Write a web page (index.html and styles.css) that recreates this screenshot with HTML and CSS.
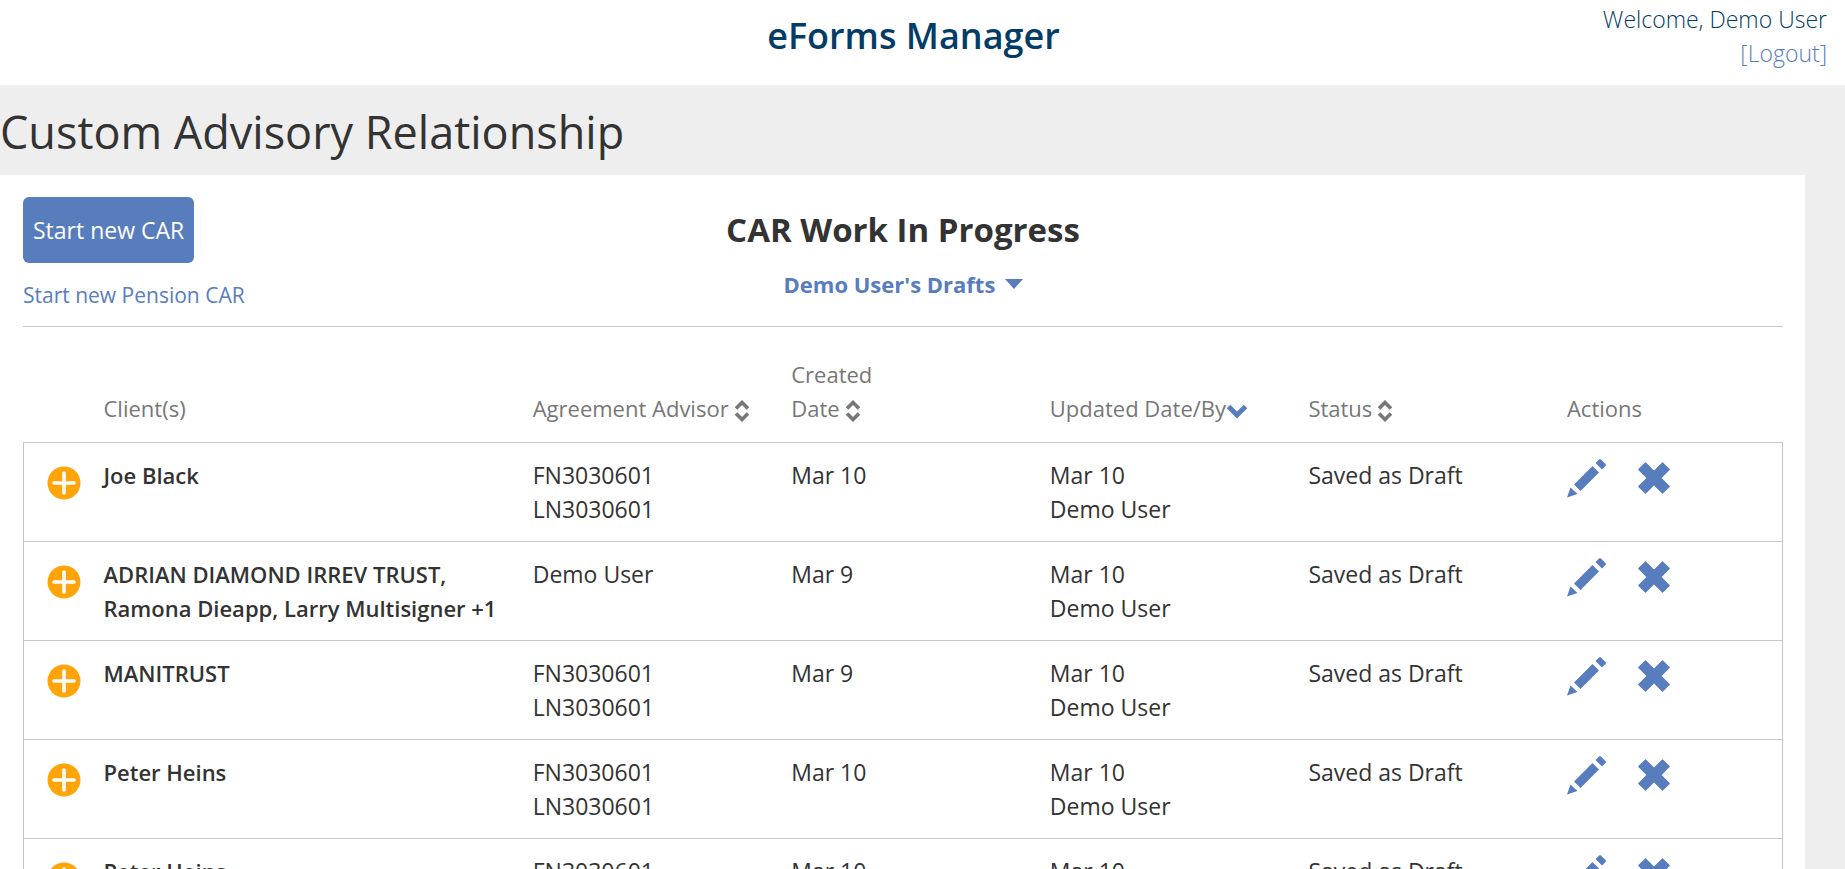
FILE: index.html
```html
<!DOCTYPE html>
<html lang="en">
<head>
<meta charset="utf-8">
<title>eForms Manager</title>
<link rel="stylesheet" href="styles.css">
</head>
<body>
<svg class="sprite" aria-hidden="true">
  <symbol id="plus" viewBox="0 0 34 34"><circle cx="17" cy="17" r="16.5" fill="#ffa50a"/><path d="M17 7v20M7 17h20" stroke="#fff" stroke-width="3.6" stroke-linecap="round"/></symbol>
  <symbol id="pencil" viewBox="0 0 40 40"><path d="M0 39.500 3.500 29.500l7 6.500ZM7 26.500 25.500 8l6.500 6.500L13.500 33ZM28.500 5 32 1.500q1-1 2 0l4.500 4.500q1 1 0 2L35 11.500Z" fill="currentColor"/></symbol>
  <symbol id="cross" viewBox="0 0 32 32"><path d="M7.500.8 16 9.300 24.500.8 31.200 7.500 22.700 16l8.500 8.500-6.700 6.700L16 22.700 7.500 31.200.8 24.500 9.300 16 .8 7.500Z" fill="currentColor" stroke="currentColor" stroke-width="1.200" stroke-linejoin="round"/></symbol>
  <symbol id="sort" viewBox="0 0 16 22"><path d="M2 8.500 8 2.500l6 6M2 13.500l6 6 6-6" fill="none" stroke="currentColor" stroke-width="3.600"/></symbol>
  <symbol id="down" viewBox="0 0 22 15"><path d="M2.500 2.500 11 11l8.500-8.500" fill="none" stroke="currentColor" stroke-width="5"/></symbol>
</svg>
<header class="topbar">
  <h1 class="brand">eForms Manager</h1>
  <div class="account">
    <div>Welcome, Demo User</div>
    <a href="#logout">[Logout]</a>
  </div>
</header>
<h2 class="page-title">Custom Advisory Relationship</h2>
<main class="panel">
  <section class="intro">
    <div class="start">
      <button class="primary" type="button">Start new CAR</button>
      <a class="secondary" href="#pension">Start new Pension CAR</a>
    </div>
    <div class="heading">
      <h3>CAR Work In Progress</h3>
      <div class="filter">
        <select aria-label="Drafts to show"><option>Demo User's Drafts</option></select>
        <svg class="caret" viewBox="0 0 18 10" aria-hidden="true"><path d="M0 0h18L9 10Z" fill="currentColor"/></svg>
      </div>
    </div>
  </section>
  <table class="drafts">
    <colgroup><col class="c-expand"><col class="c-client"><col class="c-data"><col class="c-data"><col class="c-data"><col class="c-data"><col></colgroup>
    <thead>
      <tr>
        <th aria-label="Expand"></th>
        <th>Client(s)</th>
        <th><button type="button">Agreement Advisor<svg class="sort"><use href="#sort"/></svg></button></th>
        <th><button type="button">Created<br>Date<svg class="sort"><use href="#sort"/></svg></button></th>
        <th><button type="button">Updated Date/By<svg class="down"><use href="#down"/></svg></button></th>
        <th><button type="button">Status<svg class="sort"><use href="#sort"/></svg></button></th>
        <th>Actions</th>
      </tr>
    </thead>
    <tbody>
      <tr>
        <td class="expand"><button type="button" aria-label="Expand"><svg class="plus"><use href="#plus"/></svg></button></td>
        <td class="client">Joe Black</td>
        <td>FN3030601<br>LN3030601</td>
        <td>Mar 10</td>
        <td>Mar 10<br>Demo User</td>
        <td>Saved as Draft</td>
        <td><div class="actions"><button type="button" aria-label="Edit"><svg class="pencil"><use href="#pencil"/></svg></button><button type="button" aria-label="Delete"><svg class="cross"><use href="#cross"/></svg></button></div></td>
      </tr>
      <tr>
        <td class="expand"><button type="button" aria-label="Expand"><svg class="plus"><use href="#plus"/></svg></button></td>
        <td class="client">ADRIAN DIAMOND IRREV TRUST,<br>Ramona Dieapp, Larry Multisigner +1</td>
        <td>Demo User</td>
        <td>Mar 9</td>
        <td>Mar 10<br>Demo User</td>
        <td>Saved as Draft</td>
        <td><div class="actions"><button type="button" aria-label="Edit"><svg class="pencil"><use href="#pencil"/></svg></button><button type="button" aria-label="Delete"><svg class="cross"><use href="#cross"/></svg></button></div></td>
      </tr>
      <tr>
        <td class="expand"><button type="button" aria-label="Expand"><svg class="plus"><use href="#plus"/></svg></button></td>
        <td class="client">MANITRUST</td>
        <td>FN3030601<br>LN3030601</td>
        <td>Mar 9</td>
        <td>Mar 10<br>Demo User</td>
        <td>Saved as Draft</td>
        <td><div class="actions"><button type="button" aria-label="Edit"><svg class="pencil"><use href="#pencil"/></svg></button><button type="button" aria-label="Delete"><svg class="cross"><use href="#cross"/></svg></button></div></td>
      </tr>
      <tr>
        <td class="expand"><button type="button" aria-label="Expand"><svg class="plus"><use href="#plus"/></svg></button></td>
        <td class="client">Peter Heins</td>
        <td>FN3030601<br>LN3030601</td>
        <td>Mar 10</td>
        <td>Mar 10<br>Demo User</td>
        <td>Saved as Draft</td>
        <td><div class="actions"><button type="button" aria-label="Edit"><svg class="pencil"><use href="#pencil"/></svg></button><button type="button" aria-label="Delete"><svg class="cross"><use href="#cross"/></svg></button></div></td>
      </tr>
      <tr>
        <td class="expand"><button type="button" aria-label="Expand"><svg class="plus"><use href="#plus"/></svg></button></td>
        <td class="client">Peter Heins</td>
        <td>FN3030601<br>LN3030601</td>
        <td>Mar 10</td>
        <td>Mar 10<br>Demo User</td>
        <td>Saved as Draft</td>
        <td><div class="actions"><button type="button" aria-label="Edit"><svg class="pencil"><use href="#pencil"/></svg></button><button type="button" aria-label="Delete"><svg class="cross"><use href="#cross"/></svg></button></div></td>
      </tr>
    </tbody>
  </table>
</main>
</body>
</html>
```
FILE: styles.css
```css
* { box-sizing: border-box; }
html { height: 100%; overflow: hidden; }
body {
  height: 100%;
  margin: 0;
  overflow: hidden;
  background: #eee;
  color: #333;
  font: 400 23px/34px "Open Sans", "Noto Sans", sans-serif;
}
h1, h2, h3 { margin: 0; }
a { color: #587dbd; text-decoration: none; }
button {
  padding: 0;
  border: 0;
  background: none;
  color: inherit;
  font: inherit;
  text-align: left;
  cursor: pointer;
}
svg { display: block; }
.sprite { position: absolute; width: 0; height: 0; }

.topbar {
  display: grid;
  grid-template-columns: 1fr auto 1fr;
  padding: 2px 18px 15px 0;
  background: #fff;
  color: #043c66;
}
.brand {
  grid-column: 2;
  font-size: 36px;
  font-weight: 600;
  line-height: 68px;
}
.account { font-weight: 300; text-align: right; }

.page-title {
  padding-top: 4px;
  font-size: 45px;
  font-weight: 400;
  line-height: 86px;
}

.panel {
  margin-right: 40px;
  padding: 22px 22px 0 23px;
  background: #fff;
}
.intro {
  display: grid;
  grid-template-columns: 1fr auto 1fr;
  padding-bottom: 14px;
  border-bottom: 1px solid #c4c6c8;
}
.start {
  display: flex;
  flex-direction: column;
  align-items: flex-start;
  gap: 15px;
}
.primary {
  padding: 16px 10px;
  border-radius: 6px;
  background: #587dbd;
  color: #fff;
}
.secondary { font-size: 21px; }
.heading {
  display: flex;
  flex-direction: column;
  align-items: center;
  gap: 4px;
}
.heading h3 {
  font-size: 33px;
  font-weight: 700;
  line-height: 66px;
}
.filter {
  display: grid;
  align-items: center;
  color: #587dbd;
}
.filter select, .caret { grid-area: 1 / 1; }
.filter select {
  appearance: none;
  padding: 0 27px 0 0;
  border: 0;
  background: none;
  color: inherit;
  font: inherit;
  font-size: 22px;
  font-weight: 700;
}
.caret {
  justify-self: end;
  width: 18px;
  height: 10px;
  pointer-events: none;
}

.drafts {
  width: 100%;
  table-layout: fixed;
  border-collapse: collapse;
}
.c-expand { width: 80px; }
.c-client { width: 24.4%; }
.c-data { width: 14.7%; }
.drafts th {
  padding: 30px 0 17px;
  color: #777;
  font-size: 22px;
  font-weight: 400;
  text-align: left;
  vertical-align: bottom;
}
.drafts th button { display: block; white-space: nowrap; }
.drafts th svg { display: inline-block; vertical-align: middle; }
.sort { width: 16px; height: 22px; margin-left: 5px; }
.down { width: 22px; height: 15px; color: #587dbd; }
.drafts tbody { border: 1px solid #c4c6c8; }
.drafts tbody tr { border-top: 1px solid #c4c6c8; }
.drafts td { padding: 15px 0; vertical-align: top; }
.drafts .client { font-size: 22px; font-weight: 600; white-space: nowrap; }
.drafts .expand { padding: 23px 0 0 23px; }
.plus { width: 34px; height: 34px; }
.actions {
  display: flex;
  align-items: center;
  gap: 31px;
  color: #587dbd;
}
.pencil { width: 40px; height: 40px; }
.cross { width: 32px; height: 32px; }
```
